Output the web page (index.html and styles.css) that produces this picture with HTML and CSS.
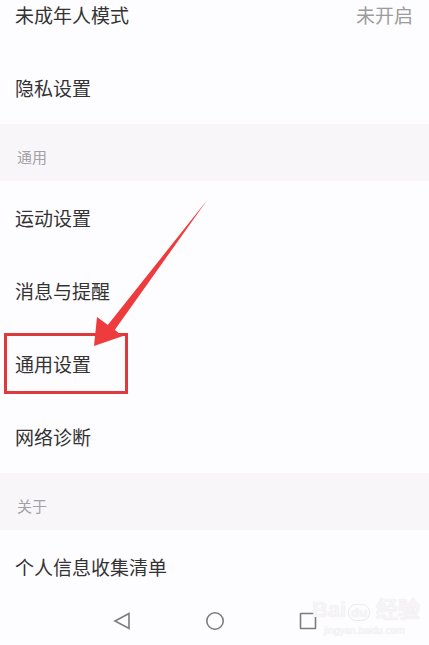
FILE: index.html
```html
<!DOCTYPE html>
<html lang="zh-CN">
<head>
  <meta charset="UTF-8" />
  <meta name="viewport" content="width=device-width, initial-scale=1.0"/>
  <title>设置</title>
  <link rel="stylesheet" href="styles.css">
</head>
<body>
  <div class="page">
    <div class="list">
      <div class="row"><span>未成年人模式</span><span class="value">未开启</span></div>
      <div class="row"><span>隐私设置</span></div>
      <div class="group">通用</div>
      <div class="row"><span>运动设置</span></div>
      <div class="row"><span>消息与提醒</span></div>
      <div class="row"><span>通用设置</span></div>
      <div class="row"><span>网络诊断</span></div>
      <div class="group">关于</div>
      <div class="row"><span>个人信息收集清单</span></div>
    </div>

    <div class="navbar">
      <svg class="nav-icon" viewBox="0 0 18 18"><path d="M16 1.5 L2 9 L16 16.5 Z" /></svg>
      <svg class="nav-icon" viewBox="0 0 18 18"><circle cx="9" cy="9" r="8.2" /></svg>
      <svg class="nav-icon" viewBox="0 0 18 18"><rect x="1.5" y="1.5" width="15" height="15" rx="0.5" /></svg>
    </div>

    <!-- annotation layer -->
    <div class="mark-box"></div>
    <svg class="mark-arrow" viewBox="0 0 429 645">
      <path d="M208 199 L206.5 201 L114 331 L107 326 Z" />
      <path d="M94 346 L97 317 L123 336 Z" />
    </svg>

    <div class="watermark">
      <div class="wm-logo">Bai<span class="wm-du">du</span> 经验</div>
      <div class="wm-url">jingyan.baidu.com</div>
    </div>
  </div>
</body>
</html>
```

FILE: styles.css
```css
:root {
  --bg: #fdfcfe;
  --band: #f8f6f9;
  --text-color: #333;
  --muted: #9b9b9b;
  --mark: #de3a3c;
}
body {
  margin: 0;
  font-family: "Noto Sans CJK SC", "Noto Sans", sans-serif;
  background-color: var(--bg);
  color: var(--text-color);
}
.page {
  position: relative;
  width: 429px;
  height: 645px;
  overflow: hidden;
  display: flex;
  flex-direction: column;
}
.list {
  margin-top: -22px;
}
.row {
  height: 73px;
  display: flex;
  justify-content: space-between;
  align-items: center;
  padding: 0 16px 0 15px;
  font-size: 19px;
}
.row .value {
  color: var(--muted);
}
.group {
  height: 57px;
  background: var(--band);
  box-sizing: border-box;
  padding: 8px 17px 0;
  display: flex;
  align-items: center;
  font-size: 15px;
  color: #a3a1a5;
}
.navbar {
  flex: 1;
  display: flex;
  justify-content: center;
  align-items: flex-start;
  gap: 75px;
  padding-top: 9px;
}
.nav-icon {
  width: 18px;
  height: 18px;
  fill: none;
  stroke: #7d7b80;
  stroke-width: 1.6;
}
.mark-box {
  position: absolute;
  left: 4px;
  top: 333px;
  width: 118px;
  height: 55px;
  border: 3px solid var(--mark);
}
.mark-arrow {
  position: absolute;
  left: 0;
  top: 0;
  width: 429px;
  height: 645px;
  fill: #ee3b3d;
}
.watermark {
  position: absolute;
  left: 312px;
  top: 598px;
  color: #f6f4f8;
  font-family: "Liberation Sans", sans-serif;
  text-shadow: 0 0 1px #e4e2e7;
}
.wm-logo {
  font-size: 22px;
  font-weight: bold;
  line-height: 24px;
}
.wm-du {
  font-size: 13px;
  border: 1px solid #ebe9ee;
  border-radius: 8px;
  padding: 0 2px;
  margin-left: 2px;
}
.wm-url {
  font-size: 10px;
  line-height: 12px;
  margin-left: 12px;
}
```
